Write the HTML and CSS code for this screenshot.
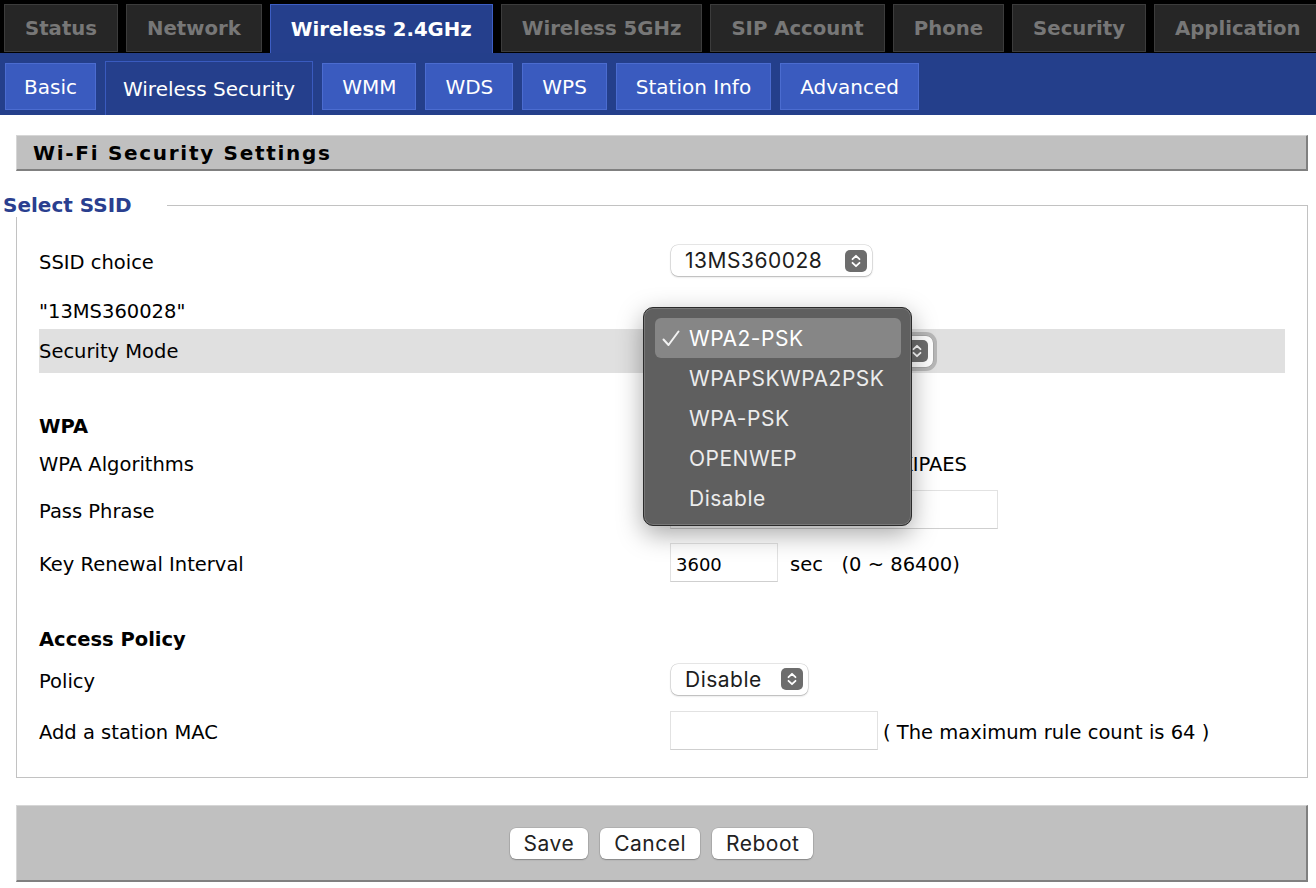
FILE: index.html
```html
<!DOCTYPE html>
<html>
<head>
<meta charset="utf-8">
<title>Wireless Security</title>
<link rel="stylesheet" href="styles.css">
</head>
<body>
<nav class="topnav">
  <a class="ttab">Status</a>
  <a class="ttab">Network</a>
  <a class="ttab active">Wireless 2.4GHz</a>
  <a class="ttab">Wireless 5GHz</a>
  <a class="ttab">SIP Account</a>
  <a class="ttab">Phone</a>
  <a class="ttab">Security</a>
  <a class="ttab">Application</a>
</nav>
<nav class="subnav">
  <a class="stab">Basic</a>
  <a class="stab active">Wireless Security</a>
  <a class="stab">WMM</a>
  <a class="stab">WDS</a>
  <a class="stab">WPS</a>
  <a class="stab">Station Info</a>
  <a class="stab">Advanced</a>
</nav>
<main class="content">
  <div class="section-title">Wi-Fi Security Settings</div>
  <div class="group-head"><span class="legend">Select SSID</span><span class="group-line"></span></div>
  <div class="group-box">
    <div class="row r-ssid">
      <div class="label">SSID choice</div>
      <div class="value">
        <span class="select sel-ssid"><span class="sel-text">13MS360028</span><svg class="stepper" viewBox="0 0 22 22" width="22" height="22"><rect width="22" height="22" rx="5" fill="#6d6d6d"/><path d="M7.5 9.2 L11 5.8 L14.5 9.2 M7.5 12.8 L11 16.2 L14.5 12.8" fill="none" stroke="#fff" stroke-width="1.8" stroke-linecap="round" stroke-linejoin="round"/></svg></span>
      </div>
    </div>
    <div class="row r-name">
      <div class="label">"13MS360028"</div>
    </div>
    <div class="row r-mode">
      <div class="label">Security Mode</div>
      <div class="value">
        <span class="select sel-mode focused"><span class="sel-text">WPA2-PSK</span><svg class="stepper" viewBox="0 0 22 22" width="22" height="22"><rect width="22" height="22" rx="5" fill="#6d6d6d"/><path d="M7.5 9.2 L11 5.8 L14.5 9.2 M7.5 12.8 L11 16.2 L14.5 12.8" fill="none" stroke="#fff" stroke-width="1.8" stroke-linecap="round" stroke-linejoin="round"/></svg></span>
      </div>
    </div>
    <div class="row r-head1">
      <div class="label heading">WPA</div>
    </div>
    <div class="row r-alg">
      <div class="label">WPA Algorithms</div>
      <div class="value radios">
        <span class="rpair"><span class="radio"></span><span>TKIP</span></span>
        <span class="rpair"><span class="radio"></span><span>AES</span></span>
        <span class="rpair last"><span class="radio on"></span><span>TKIPAES</span></span>
      </div>
    </div>
    <div class="row r-pass">
      <div class="label">Pass Phrase</div>
      <div class="value"><input class="inp inp-pass" type="text" value=""></div>
    </div>
    <div class="row r-key">
      <div class="label">Key Renewal Interval</div>
      <div class="value"><input class="inp inp-key" type="text" value="3600"><span class="unit">sec&nbsp;&nbsp;&nbsp;(0 ~ 86400)</span></div>
    </div>
    <div class="row r-head2">
      <div class="label heading">Access Policy</div>
    </div>
    <div class="row r-policy">
      <div class="label">Policy</div>
      <div class="value">
        <span class="select sel-policy"><span class="sel-text">Disable</span><svg class="stepper" viewBox="0 0 22 22" width="22" height="22"><rect width="22" height="22" rx="5" fill="#6d6d6d"/><path d="M7.5 9.2 L11 5.8 L14.5 9.2 M7.5 12.8 L11 16.2 L14.5 12.8" fill="none" stroke="#fff" stroke-width="1.8" stroke-linecap="round" stroke-linejoin="round"/></svg></span>
      </div>
    </div>
    <div class="row r-mac">
      <div class="label">Add a station MAC</div>
      <div class="value"><input class="inp inp-mac" type="text" value=""><span class="note">( The maximum rule count is 64 )</span></div>
    </div>
  </div>
  <div class="btnbar">
    <button class="btn">Save</button>
    <button class="btn">Cancel</button>
    <button class="btn">Reboot</button>
  </div>
</main>
<div class="popup">
  <div class="opt sel"><span class="check"><svg viewBox="0 0 18 17" width="18" height="17"><path d="M1.5 9.5 L6.5 15 L16.5 1.5" fill="none" stroke="#f2f2f2" stroke-width="2" stroke-linecap="round" stroke-linejoin="round"/></svg></span>WPA2-PSK</div>
  <div class="opt"><span class="check"></span>WPAPSKWPA2PSK</div>
  <div class="opt"><span class="check"></span>WPA-PSK</div>
  <div class="opt"><span class="check"></span>OPENWEP</div>
  <div class="opt"><span class="check"></span>Disable</div>
</div>
</body>
</html>
```

FILE: styles.css
```css
html, body {
  margin: 0;
  padding: 0;
  background: #fff;
}
body {
  width: 1316px;
  height: 888px;
  overflow: hidden;
  font-family: "DejaVu Sans", sans-serif;
  color: #000;
  position: relative;
}

/* top tabs */
.topnav {
  display: flex;
  align-items: flex-end;
  gap: 8px;
  height: 53px;
  box-sizing: border-box;
  padding: 0 0 0 4px;
  background: #000;
  overflow: hidden;
  white-space: nowrap;
}
.ttab {
  flex: none;
  height: 48px;
  box-sizing: border-box;
  margin-bottom: 1px;
  padding: 0 20px;
  display: flex;
  align-items: center;
  background: #262626;
  border: 1px solid #3c3c3c;
  color: #777;
  font-weight: bold;
  font-size: 19.7px;
}
.ttab.active {
  height: 49px;
  margin-bottom: 0;
  background: #253f8c;
  border-color: #3d5ec4;
  border-bottom: none;
  color: #fff;
}

/* sub tabs */
.subnav {
  display: flex;
  align-items: flex-start;
  gap: 9px;
  height: 62px;
  box-sizing: border-box;
  padding: 10px 0 0 5px;
  background: #243f8b;
  white-space: nowrap;
}
.stab {
  flex: none;
  height: 47px;
  box-sizing: border-box;
  padding: 0 19px;
  display: flex;
  align-items: center;
  background: #3a5bbf;
  border: 1px solid #4b6cd0;
  color: #fff;
  font-size: 20px;
}
.stab:first-child {
  padding: 0 18px;
}
.stab.active {
  height: 54px;
  margin-top: -2px;
  padding: 0 17px;
  background: #253f8c;
  border-color: #3a5bbf;
  border-bottom: none;
}

/* content */
.content {
  display: flex;
  flex-direction: column;
}
.section-title {
  margin: 20px 8px 0 16px;
  height: 36px;
  box-sizing: border-box;
  padding-left: 16px;
  display: flex;
  align-items: center;
  background: #c0c0c0;
  border-top: 1px solid #d6d6d6;
  border-left: 1px solid #d6d6d6;
  border-bottom: 2px solid #808080;
  border-right: 2px solid #808080;
  font-weight: bold;
  font-size: 20px;
  letter-spacing: 1.7px;
}

.group-head {
  display: flex;
  height: 24px;
  margin-top: 22px;
}
.legend {
  margin-left: 3px;
  color: #2a3f8f;
  font-weight: bold;
  font-size: 20px;
  line-height: 24px;
}
.group-line {
  flex: 1;
  align-self: flex-end;
  height: 12px;
  margin-left: 35px;
  margin-right: 8px;
  box-sizing: border-box;
  border-top: 1px solid #c2c2c2;
  border-right: 1px solid #c2c2c2;
}
.group-box {
  margin: 0 8px 0 16px;
  padding: 21px 22px 16px 22px;
  border: 1px solid #c2c2c2;
  border-top: none;
  display: flex;
  flex-direction: column;
}

.row {
  display: flex;
  align-items: center;
  font-size: 19.5px;
}
.label {
  width: 631px;
  flex: none;
}
.label.heading {
  font-weight: bold;
}
.value {
  display: flex;
  align-items: center;
}

.r-ssid { height: 48px; }
.r-name { height: 43px; align-items: flex-end; padding-bottom: 6px; box-sizing: border-box; }
.r-mode { height: 44px; background: #e0e0e0; }
.r-head1 { height: 40px; margin-top: 33px; }
.r-alg { height: 36px; }
.r-pass { height: 58px; }
.r-key { height: 48px; }
.r-head2 { height: 40px; margin-top: 31px; }
.r-policy { height: 44px; }
.r-mac { height: 58px; }

/* select look-alike */
.select {
  display: inline-flex;
  align-items: center;
  justify-content: space-between;
  height: 31px;
  box-sizing: border-box;
  padding: 0 5px 0 14px;
  margin-left: 1px;
  margin-bottom: 3px;
  background: #fff;
  border-radius: 7px;
  box-shadow: 0 0 0 0.5px rgba(0, 0, 0, 0.18), 0 1px 2px rgba(0, 0, 0, 0.22);
  font-family: Inter, "Liberation Sans", sans-serif;
  font-size: 21px;
  letter-spacing: 0.5px;
  color: #1d1d1d;
}
.sel-ssid { width: 201px; }
.sel-policy { width: 137px; margin-bottom: 4px; }
.sel-mode { width: 263px; margin-left: 0; margin-bottom: 0; }
.select.focused {
  box-shadow: 0 0 0 0.5px rgba(0, 0, 0, 0.18), 0 0 0 4px rgba(150, 150, 150, 0.55);
}
.stepper { flex: none; display: block; }

/* radios */
.radios { padding-left: 1px; }
.rpair {
  display: flex;
  align-items: center;
  gap: 6px;
  width: 98px;
}
.rpair.last { width: auto; }
.radio {
  width: 15px;
  height: 15px;
  flex: none;
  box-sizing: border-box;
  border-radius: 50%;
  border: 1px solid #999;
  background: #fff;
}
.radio.on { border: 5px solid #3478f6; }

/* inputs */
.inp {
  height: 39px;
  box-sizing: border-box;
  margin: 0 0 4px 0;
  padding: 4px 5px 0 5px;
  border: 1px solid #e2e2e2;
  border-bottom-color: #cfcfcf;
  background: #fff;
  font-family: "DejaVu Sans", sans-serif;
  font-size: 18px;
  color: #000;
  outline: none;
}
.inp-pass { width: 328px; }
.inp-key { width: 108px; }
.inp-mac { width: 208px; }
.unit { margin-left: 12px; }
.note { margin-left: 5px; }

/* button bar */
.btnbar {
  margin: 27px 8px 0 16px;
  height: 77px;
  box-sizing: border-box;
  display: flex;
  align-items: center;
  justify-content: center;
  gap: 12px;
  background: #c0c0c0;
  border-top: 1px solid #d6d6d6;
  border-left: 1px solid #d6d6d6;
  border-bottom: 2px solid #808080;
  border-right: 2px solid #808080;
}
.btn {
  height: 31px;
  padding: 0 14px;
  border: none;
  border-radius: 6px;
  background: #fff;
  box-shadow: 0 0 0 0.5px rgba(0, 0, 0, 0.15), 0 1px 1.5px rgba(0, 0, 0, 0.25);
  font-family: Inter, "Liberation Sans", sans-serif;
  font-size: 21px;
  letter-spacing: 0.5px;
  color: #222;
}

/* open select menu */
.popup {
  position: absolute;
  left: 643px;
  top: 307px;
  width: 269px;
  height: 219px;
  box-sizing: border-box;
  padding: 10px 10px 8px 11px;
  background: #5f5f5f;
  border: 1px solid #2b2b2b;
  border-radius: 10px;
  box-shadow: inset 0 0 0 1px rgba(255, 255, 255, 0.16), 0 8px 26px rgba(0, 0, 0, 0.35);
  font-family: Inter, "Liberation Sans", sans-serif;
  font-size: 21px;
  letter-spacing: 0.5px;
  color: #ececec;
}
.opt {
  height: 40px;
  display: flex;
  align-items: center;
  padding-left: 7px;
  border-radius: 6px;
}
.opt.sel {
  background: #868686;
  color: #fff;
}
.check {
  width: 27px;
  flex: none;
  display: flex;
  align-items: center;
}
.check svg { display: block; }
```
